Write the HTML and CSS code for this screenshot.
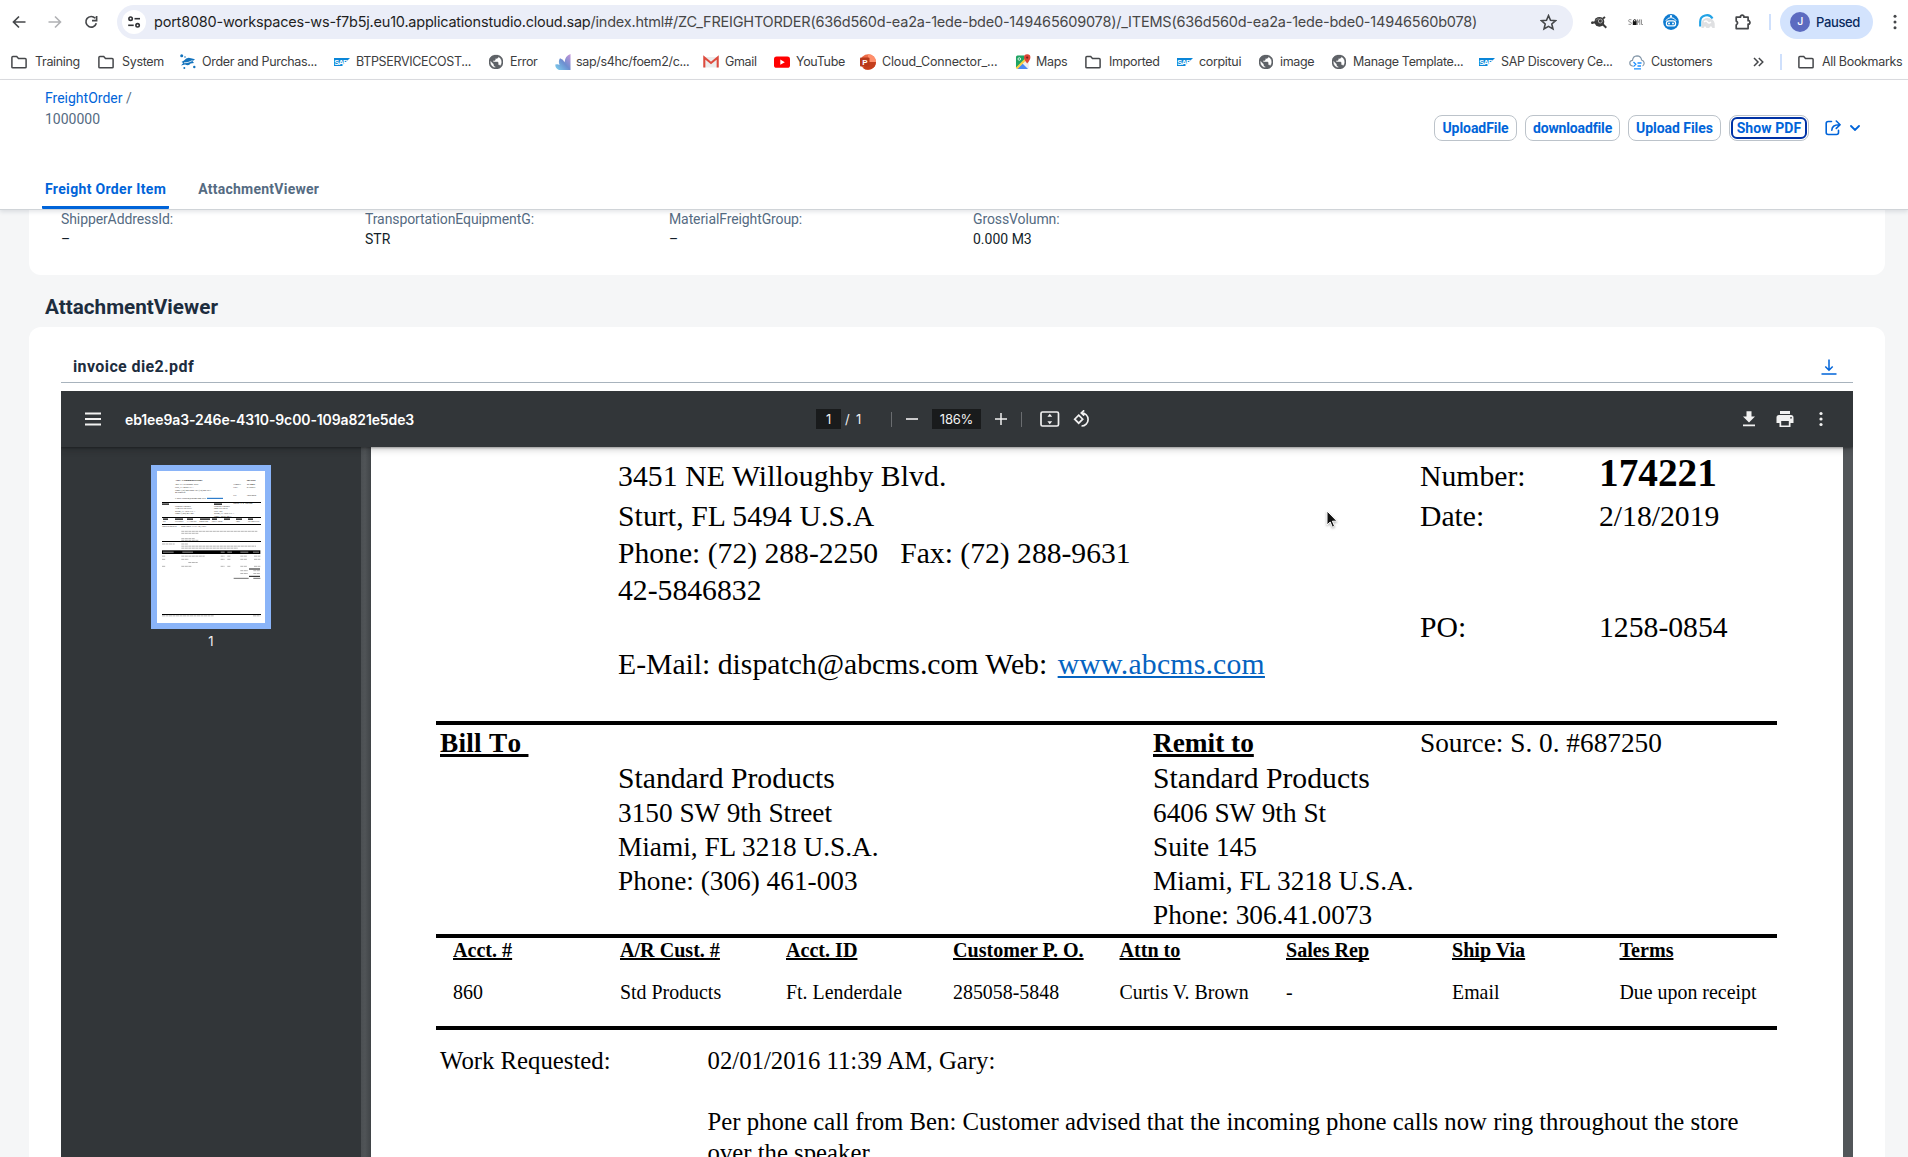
FILE: index.html
```html
<!DOCTYPE html>
<html lang="en">
<head>
<meta charset="utf-8">
<title>FreightOrder</title>
<link rel="stylesheet" href="styles.css">
</head>
<body>
<svg class="defs" width="0" height="0" aria-hidden="true">
  <symbol id="folder" viewBox="0 0 16 16"><path d="M.9 13.2V3.4q0-1 1-1h3.8l1.8 2h6.6q1 0 1 1v7.8q0 .6-1 .6H1.9q-1 0-1-.6z" fill="none" stroke="#45474a" stroke-width="1.500"/></symbol>
  <symbol id="sap" viewBox="0 0 16 16"><path d="M0 4h16l-8 8H0z" fill="#0a86d8"/><text x=".2" y="10.700" font-family="Liberation Sans, sans-serif" font-size="7.400" font-weight="700" letter-spacing="-.7" fill="#fff">SAP</text></symbol>
  <symbol id="globe" viewBox="2 2 20 20"><path d="M12 2C6.480 2 2 6.480 2 12s4.480 10 10 10 10-4.480 10-10S17.520 2 12 2zm-1 17.930c-3.950-.49-7-3.850-7-7.930 0-.62.080-1.210.210-1.790L9 15v1c0 1.100.9 2 2 2v1.930zm6.900-2.540c-.26-.81-1-1.390-1.900-1.390h-1v-3c0-.55-.45-1-1-1H8v-2h2c.55 0 1-.45 1-1V7h2c1.100 0 2-.9 2-2v-.41c2.930 1.190 5 4.060 5 7.410 0 2.080-.8 3.970-2.100 5.390z" fill="#5f6368" stroke="#5f6368" stroke-width=".6"/></symbol>
  <symbol id="dots" viewBox="0 0 16 16"><circle cx="8" cy="2.200" r="1.500"/><circle cx="8" cy="8" r="1.500"/><circle cx="8" cy="13.800" r="1.500"/></symbol>
</svg>

<header class="browser">
  <div class="toolbar">
    <svg class="ic" viewBox="0 0 16 16"><path d="M14.500 8H3M8 2.500 2.500 8 8 13.500" fill="none" stroke="#45474a" stroke-width="1.700"/></svg>
    <svg class="ic" viewBox="0 0 16 16"><path d="M1.500 8H13M8 2.500 13.500 8 8 13.500" fill="none" stroke="#b0b1b4" stroke-width="1.600"/></svg>
    <svg class="ic" viewBox="0 0 16 16"><path d="M13.300 9.300A5.300 5.300 0 1 1 12.200 4.300M13.600 2v4.600H9" fill="none" stroke="#45474a" stroke-width="1.700"/></svg>
    <div class="omnibox">
      <span class="site-info"><svg width="14" height="14" viewBox="0 0 14 14"><g fill="none" stroke="#303134" stroke-width="1.600"><circle cx="3.600" cy="3.700" r="1.700"/><path d="M7.500 3.700H13"/><circle cx="10.600" cy="10.300" r="1.700"/><path d="M1.200 10.300h5.500"/></g></svg></span>
      <span class="url">port8080-workspaces-ws-f7b5j.eu10.applicationstudio.cloud.sap<span class="path">/index.html#/ZC_FREIGHTORDER(636d560d-ea2a-1ede-bde0-149465609078)/_ITEMS(636d560d-ea2a-1ede-bde0-14946560b078)</span></span>
      <svg class="star" viewBox="0 0 16 16"><path d="M8 1.500l1.900 4.400 4.800.4-3.600 3.100 1.100 4.700L8 11.600l-4.200 2.500 1.100-4.700L1.300 6.300l4.800-.4z" fill="none" stroke="#45474a" stroke-width="1.500"/></svg>
    </div>
    <svg class="ic" viewBox="0 0 16 16"><circle cx="8.400" cy="7.800" r="4.900" fill="#3a3a3a"/><circle cx="1.200" cy="8.800" r="1.200" fill="#3a3a3a"/><path d="M1 8.800l4-.6M12 4.500l2-1.500M11 9.500l4.300 4.300" fill="none" stroke="#3a3a3a" stroke-width="2"/><circle cx="9.300" cy="7" r="2" fill="none" stroke="#bbb" stroke-width=".9"/><path d="M5 6.500q1-1.800 2.500-2" fill="none" stroke="#999" stroke-width=".8"/></svg>
    <svg class="ic" viewBox="0 0 16 16"><path d="M4.500 5.800Q1.500 4.800 1.500 6.800q0 1 1.500 1.200t1.500 1.300Q4.500 11 1.500 10.300M10.400 11V5.500l1.200 3 1.200-3V11M14.500 5.500v5h1.500" fill="none" stroke="#8a8a8a" stroke-width=".9"/><rect x="5.800" y="7.200" width="3.800" height="3.800" fill="#111"/><path d="M6.500 7.500V6.300q1.200-1.300 2.400 0v1.200" fill="none" stroke="#111"/></svg>
    <svg class="ic" viewBox="0 0 16 16"><circle cx="8" cy="8" r="7.900" fill="#0f7bd0"/><path d="M2.800 6.800Q4.500 3.600 8 3.600t5.200 3.200" fill="none" stroke="#fff" stroke-width="1"/><circle cx="8" cy="2.200" r="1.100" fill="#fff"/><rect x="2.800" y="6.200" width="10.400" height="6.400" rx="3.200" fill="#fff"/><rect x="4" y="7.500" width="8" height="3.800" rx="1.900" fill="#0f7bd0"/><circle cx="6" cy="9.400" r="1" fill="#fff"/><circle cx="10" cy="9.400" r="1" fill="#fff"/></svg>
    <svg class="ic" viewBox="0 0 16 16"><path d="M1.200 12.500V8A6.600 6.600 0 0 1 13.500 4.500" fill="none" stroke="#22a3e6" stroke-width="2.200"/><path d="M2.500 14V8.500Q4 4 8.500 4q6.300.3 7.200 5.500V14h-2.200l-1.500-2-2 2H7.500l-1.500-2-1.500 2z" fill="#dfe0e2"/><path d="M5 8q2-2 3.500 0t3.500 0" fill="none" stroke="#fff" stroke-width="1.300"/></svg>
    <svg class="ic" viewBox="0 0 16 16"><path d="M1.200 3.200h4.300V2.100q1.700-1.800 3.400 0v1.100h4.200v3.500h1.100q1.500 1.700 0 3.400h-1.100v4.500H1.200v-3.700q2.800-1.900 0-3.900z" fill="none" stroke="#45474a" stroke-width="1.700" stroke-linejoin="round"/></svg>
    <span class="vsep"></span>
    <span class="profile"><span class="avatar">J</span>Paused</span>
    <svg class="ic more" viewBox="0 0 16 16"><use href="#dots"/></svg>
  </div>
  <nav class="bookmarks">
    <a class="dir"><svg class="ic"><use href="#folder"/></svg>Training</a>
    <a class="dir"><svg class="ic"><use href="#folder"/></svg>System</a>
    <a><svg class="ic" viewBox="0 0 16 16"><g fill="#1373bd"><path d="M4 6.500Q7 2.500 11 4.200l4 1-2.500 2L14 9l-3.500.5Q9 12.500 5 10.500l-4 .9 2.300-2.300L1.500 8z"/><circle cx="1.700" cy="1.700" r="1.500"/><circle cx="4.300" cy="14" r="1"/><circle cx="14.300" cy="13" r="1.200"/><circle cx="5" cy="3" r=".8"/></g><path d="M4 8.800q4 .4 8.500-2.300" stroke="#fff" stroke-width=".8" fill="none"/></svg>Order and Purchas...</a>
    <a><svg class="ic"><use href="#sap"/></svg>BTPSERVICECOST...</a>
    <a><svg class="ic globe"><use href="#globe"/></svg>Error</a>
    <a class="fan"><svg class="ic" viewBox="0 0 16 16"><defs><linearGradient id="fg" x1="0" y1="1" x2="1" y2="0"><stop offset="0" stop-color="#7ed3f0"/><stop offset=".5" stop-color="#6d8fd0"/><stop offset="1" stop-color="#c894d8"/></linearGradient></defs><path d="M15.500 0v16H4Q0 14 .3 10.500q2.500-.8 4.200.4Q3 7 5 4.300q3.500 1 4.500 4Q10 2 15.500 0z" fill="url(#fg)"/></svg>sap/s4hc/foem2/c...</a>
    <a><svg class="ic" viewBox="0 0 16 16"><path d="M1 3h14v10.500H1z" fill="#ececec"/><path d="M1.300 13.500V3.500L8 9l6.700-5.500v10" fill="none" stroke="#dd4b3e" stroke-width="2.100"/></svg>Gmail</a>
    <a><svg class="ic" viewBox="0 0 16 16"><rect y="2.600" width="16" height="11.200" rx="2.600" fill="#f00"/><path d="M6.300 5.600v5.200l4.500-2.600z" fill="#fff"/></svg>YouTube</a>
    <a class="wide"><svg class="ic" viewBox="0 0 16 16"><circle cx="8.200" cy="8" r="7.800" fill="#ed6c47"/><path d="M8 8h8a8 8 0 0 1-13 6z" fill="#c43e1c"/><path d="M8 .2A7.800 7.800 0 0 1 16 8H8z" fill="#ff8f6b"/><rect y="3.500" width="9.500" height="9" rx="1" fill="#b7391b"/><text x="2.200" y="10.900" font-family="Liberation Sans, sans-serif" font-size="8" font-weight="700" fill="#fff">P</text></svg>Cloud_Connector_...</a>
    <a class="fan"><svg class="ic" viewBox="0 0 16 16"><rect x=".8" y="1.500" width="13" height="13.500" rx="1.500" fill="#eee"/><path d="M1 3q0-1.500 1.500-1.500H9L10 6l-9 8z" fill="#1fa463"/><path d="M2 15l5.500-5.500L13 15z" fill="#4a89f3"/><path d="M1.500 14.500L11 5" stroke="#fbd041" stroke-width="2"/><path d="M12.200.3a3.200 3.200 0 0 1 3.200 3.300q0 2-3.200 6-3.200-4-3.200-6A3.200 3.200 0 0 1 12.200.3z" fill="#dc4437"/><circle cx="12.200" cy="3.600" r="1.100" fill="#7e2018"/><circle cx="4.300" cy="5" r="1.300" fill="none" stroke="#fff" stroke-width=".8"/></svg>Maps</a>
    <a class="dir"><svg class="ic"><use href="#folder"/></svg>Imported</a>
    <a><svg class="ic"><use href="#sap"/></svg>corpitui</a>
    <a><svg class="ic globe"><use href="#globe"/></svg>image</a>
    <a><svg class="ic globe"><use href="#globe"/></svg>Manage Template...</a>
    <a><svg class="ic"><use href="#sap"/></svg>SAP Discovery Ce...</a>
    <a><svg class="ic" viewBox="0 0 16 16"><path d="M4 12H3.300Q.7 11.500.8 8.800 1 6.500 3.500 6.300 4 2 8 1.800q4 0 4.600 4.200Q15 6.800 15.200 9 15 11.500 13.500 12" fill="none" stroke="#8396a8" stroke-width="1.200"/><path d="M4.500 8l2.300 2.300-2.300 2.300M8.500 9h4M8.500 12h3.500M5 14.800h7" fill="none" stroke="#1b90ff" stroke-width="1.300"/></svg>Customers</a>
    <svg class="chev" viewBox="0 0 11 10"><path d="M1 1l4 4-4 4M5.800 1l4 4-4 4" fill="none" stroke="#45474a" stroke-width="1.500"/></svg>
    <span class="vsep"></span>
    <a class="dir"><svg class="ic"><use href="#folder"/></svg>All Bookmarks</a>
  </nav>
</header>

<section class="page-head">
  <div class="title-row">
    <div class="crumbs">
      <div><a class="link">FreightOrder</a> /</div>
      <div>1000000</div>
    </div>
    <div class="actions">
      <button class="btn upload">UploadFile</button>
      <button class="btn download">downloadfile</button>
      <button class="btn files">Upload Files</button>
      <button class="btn show focus">Show PDF</button>
      <svg class="share" viewBox="0 0 17 16"><path d="M6.500 1.500H3.200q-2 0-2 2v9q0 2 2 2h8.300q2 0 2-2v-2.200M6.800 10.200Q7 4.800 14 4.700M11.300 1l3.800 3.700-3.800 3.700" fill="none" stroke="#0064d9" stroke-width="1.600" stroke-linecap="round" stroke-linejoin="round"/></svg>
      <svg class="caret" viewBox="0 0 10 6"><path d="M1 1l4 4 4-4" fill="none" stroke="#0064d9" stroke-width="1.800" stroke-linecap="round"/></svg>
    </div>
  </div>
  <div class="tabs"><a class="tab on">Freight Order Item</a><a class="tab">AttachmentViewer</a></div>
</section>

<main class="content">
  <div class="card fields">
    <div><label>ShipperAddressId:</label><span>–</span></div>
    <div><label>TransportationEquipmentG:</label><span>STR</span></div>
    <div><label>MaterialFreightGroup:</label><span>–</span></div>
    <div><label>GrossVolumn:</label><span>0.000 M3</span></div>
  </div>
  <h2>AttachmentViewer</h2>
  <div class="card viewer">
    <div class="file-head">
      <span>invoice die2.pdf</span>
      <svg width="16" height="16" viewBox="0 0 16 16"><path d="M8 .5V11M4.300 7.500L8 11.200l3.700-3.700M.5 15h15" fill="none" stroke="#0064d9" stroke-width="1.500"/></svg>
    </div>
    <div class="pdf">
      <div class="pdf-bar">
        <div class="pdf-left">
          <svg width="16" height="14" viewBox="0 0 16 14"><path d="M0 1.500h16M0 7h16M0 12.500h16" stroke="#f1f1f1" stroke-width="2"/></svg>
          <span class="pdf-title">eb1ee9a3-246e-4310-9c00-109a821e5de3</span>
        </div>
        <div class="pdf-mid">
          <span class="box">1</span><span class="slash">/</span><span>1</span>
          <i></i>
          <svg viewBox="0 0 12 12"><path d="M0 6h12" stroke="#f1f1f1" stroke-width="1.600"/></svg>
          <span class="box">186%</span>
          <svg viewBox="0 0 12 12"><path d="M0 6h12M6 0v12" stroke="#f1f1f1" stroke-width="1.500"/></svg>
          <i></i>
          <svg viewBox="0 0 20 16"><rect x="1" y="1" width="17.500" height="14" rx="1.500" fill="none" stroke="#f1f1f1" stroke-width="1.700"/><path d="M9.800 2.800l2.400 3H7.400zM9.800 13.200l2.400-3H7.400z" fill="#f1f1f1"/></svg>
          <svg viewBox="0 0 18 18"><path d="M5.700 5.200l4 4-4 4-4-4z" fill="none" stroke="#f1f1f1" stroke-width="1.700"/><path d="M8.500 2.800a6.600 6.600 0 1 1 0 13.200M11.200.3L8.300 3l2.900 2.700" fill="none" stroke="#f1f1f1" stroke-width="1.700"/></svg>
        </div>
        <div class="pdf-right">
          <svg viewBox="0 0 18 18"><path d="M6.500 1.200h5v5.300H15l-6 6-6-6h3.500zM3 14.500h12v1.800H3z" fill="#f1f1f1"/></svg>
          <svg viewBox="0 0 18 18"><path d="M4 1h10v3H4zM3 5h12q2.500 0 2.500 2.500V13H14.500v4h-11v-4H.5V7.500Q.5 5 3 5zm2.200 6v4.500h7.600V11zM15 6.900a.9.900 0 1 0 .1 1.800.9.900 0 0 0-.1-1.800z" fill="#f1f1f1" fill-rule="evenodd"/></svg>
          <svg viewBox="0 0 18 18"><g fill="#f1f1f1"><circle cx="9" cy="3.500" r="1.600"/><circle cx="9" cy="9" r="1.600"/><circle cx="9" cy="14.500" r="1.600"/></g></svg>
        </div>
      </div>
      <div class="pdf-body">
        <aside class="thumbs">
          <div class="thumb">
            <svg viewBox="0 0 324 456" font-family="Liberation Serif, serif" font-size="6.500" fill="#222">
              <g font-weight="700"><text x="54" y="30" font-size="8.500">ABC Communications</text><text x="269" y="30" font-size="8.500">Invoice</text><text x="269" y="42" font-size="8.500">174221</text></g>
              <text x="54" y="42">3451 NE Willoughby Blvd.</text><text x="54" y="51">Sturt, FL 5494 U.S.A</text><text x="54" y="60">Phone: (72) 288-2250 Fax: (72) 288-9631</text><text x="54" y="66">42-5846832</text><text x="54" y="84">E-Mail: dispatch@abcms.com Web:</text>
              <text x="229" y="42">Number:</text><text x="229" y="51">Date:</text><text x="269" y="51">2/18/2019</text><text x="229" y="75">PO:</text><text x="269" y="75">1258-0854</text>
              <path d="M150 82h48" stroke="#0563c1" stroke-width="3"/>
              <path d="M15 94.500h297M15 139.500h297M15 160.500h297M15 211.500h297M15 430.500h297" stroke="#000" stroke-width="3"/>
              <path d="M15 99.500h21M171 99.500h24M18 144.500h15M54 144.500h24M90 144.500h18M129 144.500h30M165 144.500h15M201 144.500h18M237 144.500h18M273 144.500h15" stroke="#000" stroke-width="3.500"/>
              <text x="229" y="99">Source: S. 0. #687250</text>
              <text x="54" y="109">Standard Products</text><text x="54" y="115">3150 SW 9th Street</text><text x="54" y="124">Miami, FL 3218 U.S.A.</text><text x="54" y="130">Phone: (306) 461-003</text>
              <text x="171" y="109">Standard Products</text><text x="171" y="115">6406 SW 9th St</text><text x="171" y="124">Suite 145</text><text x="171" y="130">Miami, FL 3218 U.S.A.</text><text x="171" y="137">Phone: 306.41.0073</text>
              <g font-size="5"><text x="18" y="152">860</text><text x="54" y="152">Std Products</text><text x="90" y="152">Ft. Lenderdale</text><text x="127" y="152">285058-5848</text><text x="164" y="152">Curtis V. Brown</text><text x="237" y="152">Email</text><text x="273" y="152">Due upon receipt</text></g>
              <text x="15" y="168">Work Requested:</text><text x="73" y="168">02/01/2016 11:39 AM, Gary:</text>
              <g fill="none" stroke="#9a9a9a" stroke-width="2.200" stroke-dasharray="9 1.500"><path d="M73 181h228M73 187h51M73 203h40M73 208h52M15 219h38M73 219h20M73 225.500h224M73 231.500h170"/><path d="M15 255.500h11M73 255.500h70M191 255.500h12M211 255.500h9M250 255.500h20M291 255.500h19M15 265h11M73 265h22M191 265h12M211 265h9M250 265h20M291 265h19M94 274.500h28M15 286h11M73 286h30M191 286h12M211 286h9M250 286h20M291 286h19M250 299h23M289 299h21M250 307.500h23M289 307.500h21M15 434.500h155M288 434.500h22"/></g>
              <rect x="15" y="238" width="295" height="11" fill="#000"/><path d="M18 243.500h32M76 243.500h32M191 243.500h12M211 243.500h14M250 243.500h24M288 243.500h18" stroke="#aaa" stroke-width="2.500"/>
              <path d="M276 294h33M276 316h33" stroke="#111" stroke-width="3"/><path d="M230 322h45M289 322h21" stroke="#555" stroke-width="2.500"/>
            </svg>
          </div>
          <span>1</span>
        </aside>
        <div class="splitter"></div>
        <article class="paper">
          <div class="company">
            <div class="row first"><span class="c2 street">3451 NE Willoughby Blvd.</span><span class="c4">Number:</span><span class="c5 num">174221</span></div>
            <div class="row"><span class="c2 street">Sturt, FL 5494 U.S.A</span><span class="c4">Date:</span><span class="c5 date">2/18/2019</span></div>
            <div class="row"><span class="c2 phone">Phone: (72) 288-2250&nbsp;&nbsp; Fax: (72) 288-9631</span></div>
            <div class="row"><span class="c2">42-5846832</span></div>
            <div class="row"><span class="c4">PO:</span><span class="c5">1258-0854</span></div>
            <div class="row"><span class="c2">E-Mail: dispatch@abcms.com Web: <a>www.abcms.com</a></span></div>
          </div>
          <div class="parties">
            <div class="row tall"><b class="c1">Bill To </b><b class="c3">Remit to</b><span class="c4">Source: S. 0. #687250</span></div>
            <div class="row tall big"><span class="c2">Standard Products</span><span class="c3">Standard Products</span></div>
            <div class="row"><span class="c2">3150 SW 9th Street</span><span class="c3">6406 SW 9th St</span></div>
            <div class="row"><span class="c2">Miami, FL 3218 U.S.A.</span><span class="c3">Suite 145</span></div>
            <div class="row"><span class="c2">Phone: (306) 461-003</span><span class="c3">Miami, FL 3218 U.S.A.</span></div>
            <div class="row"><span class="c3">Phone: 306.41.0073</span></div>
          </div>
          <div class="account">
            <b>Acct. #</b><b>A/R Cust. #</b><b>Acct. ID</b><b>Customer P. O.</b><b>Attn to</b><b>Sales Rep</b><b>Ship Via</b><b>Terms</b>
            <span>860</span><span>Std Products</span><span>Ft. Lenderdale</span><span>285058-5848</span><span>Curtis V. Brown</span><span>-</span><span>Email</span><span>Due upon receipt</span>
          </div>
          <div class="work">
            <span>Work Requested:</span>
            <div>
              <p>02/01/2016 11:39 AM, Gary:</p>
              <p>Per phone call from Ben: Customer advised that the incoming phone calls now ring throughout the store<br>over the speaker.</p>
            </div>
          </div>
        </article>
      </div>
    </div>
  </div>
</main>
<svg class="cursor" viewBox="0 0 12 19"><path d="M1 1v14l3.200-3 2.200 5.200 2.200-1-2.200-5H11z" fill="#111" stroke="#fff" stroke-width="1"/></svg>
</body>
</html>
```
FILE: styles.css
```css
* { box-sizing: border-box; }
body {
  margin: 0;
  height: 1157px;
  overflow: hidden;
  background: #f5f6f7;
  font-family: Roboto, "Liberation Sans", sans-serif;
  display: flex;
  flex-direction: column;
}
.defs { position: absolute; }

/* Browser chrome */
.browser {
  flex: none;
  height: 80px;
  background: #fff;
  border-bottom: 1px solid #dcdde0;
  font-family: Inter, "Liberation Sans", sans-serif;
}
.ic { width: 16px; height: 16px; flex: none; display: block; }
.globe { padding: .8px; }
.toolbar {
  height: 44px;
  padding-left: 11px;
  display: grid;
  grid-template-columns: 36px 36px 34px 1474px repeat(4, 36px) 34px 11px 107px 16px;
  align-items: center;
}
.omnibox {
  width: 1456px;
  height: 34px;
  border-radius: 17px;
  background: #ebeef8;
  padding: 0 16px 0 5px;
  display: flex;
  align-items: center;
}
.site-info {
  width: 24px;
  height: 24px;
  border-radius: 50%;
  background: #fff;
  display: flex;
  align-items: center;
  justify-content: center;
}
.url {
  flex: 1;
  margin-left: 8px;
  font-size: 14.5px;
  letter-spacing: -0.218px;
  line-height: 34px;
  white-space: nowrap;
  color: #1f1f1f;
}
.path { color: #474747; }
.star { width: 17px; height: 17px; }
.vsep { width: 2px; height: 16px; background: #cfe0fc; }
.profile {
  width: 93px;
  height: 34px;
  border-radius: 17px;
  background: #d3e3fd;
  color: #0a2a5e;
  padding-left: 10px;
  display: flex;
  align-items: center;
  gap: 6px;
  font-size: 13px;
  font-weight: 500;
  letter-spacing: -0.36px;
}
.avatar {
  width: 20px;
  height: 20px;
  border-radius: 50%;
  background: #5c6bc0;
  color: #fff;
  font-size: 10.5px;
  line-height: 20px;
  text-align: center;
}
.more { fill: #45474a; }
.bookmarks {
  height: 35px;
  padding-left: 11px;
  display: grid;
  grid-template-columns: 87px 82px 154px 154px 67px 148px 71px 86px 155px 70px 92px 81px 73px 148px 150px 124px 27px 18px 104px;
  align-items: center;
}
.bookmarks a {
  display: flex;
  align-items: center;
  gap: 6px;
  font-size: 12.5px;
  letter-spacing: -0.33px;
  line-height: 20px;
  white-space: nowrap;
  color: #3c3d40;
}
.bookmarks .dir { gap: 8px; }
.bookmarks .fan { gap: 5px; }
.bookmarks .wide { letter-spacing: -0.16px; }
.chev { width: 11px; height: 10px; }

/* Object page header */
.page-head {
  flex: none;
  height: 130px;
  padding: 0 48px 0 45px;
  background: #fff;
  border-bottom: 1px solid #d0d4d8;
  box-shadow: 0 2px 4px rgba(34, 53, 72, .12);
  display: flex;
  flex-direction: column;
  justify-content: space-between;
  position: relative;
}
.title-row { display: flex; justify-content: space-between; }
.crumbs {
  padding-top: 8px;
  display: grid;
  gap: 1px;
  align-content: start;
  font-size: 14px;
  line-height: 20px;
  color: #556b82;
}
.link { color: #0064d9; }
.actions { display: flex; align-items: center; gap: 8px; padding-top: 35px; height: 61px; }
.btn {
  height: 26px;
  padding: 0;
  border: 1px solid #bcc3ca;
  border-radius: 8px;
  background: #fff;
  color: #0064d9;
  font: 700 14px/24px Roboto, "Liberation Sans", sans-serif;
  letter-spacing: -0.05px;
}
.upload { width: 83px; }
.download { width: 95px; letter-spacing: -0.14px; }
.files { width: 93px; }
.show { width: 80px; letter-spacing: .1px; }
.focus { outline: 2px solid #0032a5; outline-offset: -4px; }
.share { width: 17px; height: 16px; margin-left: 8px; }
.caret { width: 10px; height: 6px; }
.tabs { display: flex; gap: 26px; margin-left: -3px; }
.tab {
  height: 30px;
  padding: 0 3px;
  border-bottom: 3px solid transparent;
  font-size: 14px;
  font-weight: 700;
  letter-spacing: .25px;
  line-height: 21px;
  color: #556b82;
}
.tab.on { color: #0064d9; border-color: #0064d9; border-radius: 0 0 1px 1px; letter-spacing: .34px; }

/* Sections */
.content { flex: 1; padding: 0 23px 0 29px; display: flex; flex-direction: column; min-height: 0; }
.card { background: #fff; border-radius: 12px; }
.fields {
  flex: none;
  height: 65px;
  padding-left: 32px;
  border-radius: 0 0 12px 12px;
  display: grid;
  grid-template-columns: repeat(4, 304px);
  font-size: 14px;
}
.fields label { display: block; line-height: 19px; color: #556b82; letter-spacing: -0.1px; }
.fields span { display: block; line-height: 20px; color: #131e29; }
h2 {
  flex: none;
  margin: 18px 0 6px 16px;
  font-size: 20.700px;
  line-height: 28px;
  color: #1d2d3e;
}
.viewer {
  flex: 1;
  min-height: 0;
  border-radius: 12px 12px 0 0;
  padding: 28px 32px 0;
  display: flex;
  flex-direction: column;
}
.file-head {
  flex: none;
  height: 28px;
  margin-bottom: 8px;
  padding: 0 16px 0 12px;
  border-bottom: 1px solid #a8b3bd;
  display: flex;
  justify-content: space-between;
  font-size: 16px;
  font-weight: 700;
  letter-spacing: .385px;
  line-height: 24px;
  color: #1d2d3e;
}
.file-head svg { margin-top: 4px; }

/* PDF viewer */
.pdf { flex: 1; min-height: 0; overflow: hidden; display: flex; flex-direction: column; background: #525659; font-family: Inter, "Liberation Sans", sans-serif; }
.pdf-bar {
  flex: none;
  height: 56px;
  background: #323639;
  color: #f1f1f1;
  position: relative;
  box-shadow: 0 4px 8px rgba(0, 0, 0, .06), 0 1px 2px rgba(0, 0, 0, .3), 0 2px 6px rgba(0, 0, 0, .15);
  display: grid;
  grid-template-columns: 755px 1fr auto;
  align-items: center;
  font-size: 13px;
  letter-spacing: -0.2px;
}
.pdf-left { display: flex; align-items: center; gap: 24px; padding-left: 24px; }
.pdf-title { font-size: 14px; font-weight: 600; letter-spacing: -0.12px; color: #fff; }
.pdf-mid {
  display: grid;
  grid-template-columns: 29px 11px 35px 15px 26px 63px 26px 20px 32px 18px;
  align-items: center;
}
.pdf-mid .box { background: #191b1c; line-height: 20px; text-align: center; }
.pdf-mid .box:first-child { width: 25px; }
.pdf-mid .box:nth-of-type(4) { width: 49px; }
.pdf-mid i { width: 1px; height: 15px; background: #6a6d70; }
.pdf-mid svg { width: 12px; height: 12px; }
.pdf-mid svg:nth-of-type(3) { width: 20px; height: 16px; margin-left: -1px; }
.pdf-mid svg:nth-of-type(4) { width: 18px; height: 18px; }
.pdf-right { display: flex; gap: 18px; padding-right: 23px; }
.pdf-right svg { width: 18px; height: 18px; }
.pdf-body { flex: 1; min-height: 0; display: grid; grid-template-columns: 300px 10px 1472px; }
.thumbs {
  background: #323639;
  padding-top: 18px;
  display: flex;
  flex-direction: column;
  align-items: center;
  gap: 4px;
  color: #f1f1f1;
  font-size: 13px;
  line-height: 16px;
}
.thumb { width: 120px; height: 164px; background: #fff; border: 6px solid #8ab4f8; }
.thumb svg { display: block; width: 108px; height: 152px; }
.splitter { background: linear-gradient(90deg, #4b4f52 0, #505457 40%, #3f4346 100%); }

/* Invoice page */
.paper {
  background: #fff;
  color: #000;
  overflow: hidden;
  padding: 10.500px 66px 0 65px;
  font-family: "Liberation Serif", serif;
  white-space: nowrap;
}
.row {
  display: grid;
  grid-template-columns: 4px 178px 535px 267px 179px 178px;
  align-items: baseline;
}
.c1 { grid-column: 2; font-kerning: none; letter-spacing: .25px; }
.c2 { grid-column: 3; }
.c3 { grid-column: 4; }
.c4 { grid-column: 5; }
.c5 { grid-column: 6; }
.company { height: 263.500px; font-size: 29.700px; line-height: 37px; }
.company .first { height: 40px; }
.company .street { letter-spacing: .080px; }
.company .phone { font-size: 29.630px; }
.company .num { font-size: 39.300px; font-weight: 700; line-height: 30px; }
.company a { margin-left: 3px; letter-spacing: .24px; color: #0563c1; text-decoration: underline 2px; text-underline-offset: 2px; text-decoration-skip-ink: none; }
.parties, .account, .work { border-top: 4px solid #000; }
.parties { height: 213px; padding-top: 1px; font-size: 27.300px; line-height: 34px; }
.parties .tall { height: 35px; }
.parties .big { font-size: 29.700px; }
.parties b { white-space: pre; text-decoration: underline 3px; text-underline-offset: 2px; text-decoration-skip-ink: none; justify-self: start; }
.account {
  height: 92px;
  padding-left: 17px;
  display: grid;
  grid-template-columns: 167px 166px 167px 166.500px 166.500px 166px 167.500px 157px;
  grid-template-rows: 42px 46px;
  font-size: 19.900px;
  line-height: 24px;
}
.account b { font-size: 20.100px; justify-self: start; text-decoration: underline 2px; text-underline-offset: 1px; text-decoration-skip-ink: none; }
.work {
  padding: 15px 0 0 4px;
  display: grid;
  grid-template-columns: 267.500px 1fr;
  font-size: 24.750px;
  line-height: 31px;
}
.work p { margin: 0 0 30px; }

.cursor { position: absolute; left: 1326px; top: 510px; width: 12px; height: 19px; filter: drop-shadow(0 1px 1px rgba(0, 0, 0, .3)); }
```
